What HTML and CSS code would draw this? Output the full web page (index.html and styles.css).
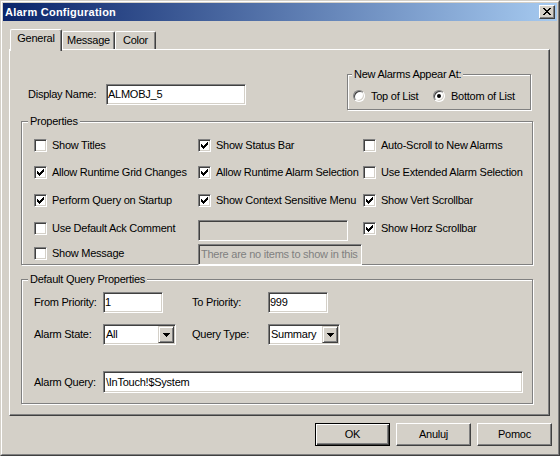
FILE: index.html
```html
<!DOCTYPE html>
<html>
<head>
<meta charset="utf-8">
<title>Alarm Configuration</title>
<link rel="stylesheet" href="styles.css">
</head>
<body>
<div class="window">
  <div class="frame">
    <div class="titlebar">
      <span class="title">Alarm Configuration</span>
      <span class="close"><svg class="close-glyph" width="8" height="7" viewBox="0 0 8 7" shape-rendering="crispEdges"><path d="M0 0h2v1h-2zM6 0h2v1h-2zM1 1h2v1h-2zM5 1h2v1h-2zM2 2h4v1h-4zM3 3h2v1h-2zM2 4h4v1h-4zM1 5h2v1h-2zM5 5h2v1h-2zM0 6h2v1h-2zM6 6h2v1h-2z" fill="#000"/></svg></span>
    </div>
    <div class="body">
      <div class="tabs">
        <div class="tab active t-general">General</div>
        <div class="tab t-message">Message</div>
        <div class="tab t-color">Color</div>
      </div>
      <div class="panel">
        <div class="top">
          <div class="name-row">
            <span class="name-lbl">Display Name:</span>
            <div class="edit name-edit">ALMOBJ_5</div>
          </div>
          <div class="group appear">
            <div class="gtitle">New Alarms Appear At:</div>
            <div class="radios">
              <div class="radio-item first"><span class="radio"></span><span>Top of List</span></div>
              <div class="radio-item"><span class="radio checked"></span><span>Bottom of List</span></div>
            </div>
          </div>
        </div>

        <div class="group props">
          <div class="gtitle">Properties</div>
          <div class="cbgrid">
            <div class="cb"><span class="box"></span><span>Show Titles</span></div>
            <div class="cb"><span class="box on"><svg width="11" height="11" viewBox="0 0 11 11" shape-rendering="crispEdges"><path d="M2 4h1v3h-1zM3 5h1v3h-1zM4 6h1v3h-1zM5 5h1v3h-1zM6 4h1v3h-1zM7 3h1v3h-1zM8 2h1v3h-1z" fill="#000"/></svg></span><span>Show Status Bar</span></div>
            <div class="cb"><span class="box"></span><span>Auto-Scroll to New Alarms</span></div>

            <div class="cb"><span class="box on"><svg width="11" height="11" viewBox="0 0 11 11" shape-rendering="crispEdges"><path d="M2 4h1v3h-1zM3 5h1v3h-1zM4 6h1v3h-1zM5 5h1v3h-1zM6 4h1v3h-1zM7 3h1v3h-1zM8 2h1v3h-1z" fill="#000"/></svg></span><span>Allow Runtime Grid Changes</span></div>
            <div class="cb"><span class="box on"><svg width="11" height="11" viewBox="0 0 11 11" shape-rendering="crispEdges"><path d="M2 4h1v3h-1zM3 5h1v3h-1zM4 6h1v3h-1zM5 5h1v3h-1zM6 4h1v3h-1zM7 3h1v3h-1zM8 2h1v3h-1z" fill="#000"/></svg></span><span>Allow Runtime Alarm Selection</span></div>
            <div class="cb"><span class="box"></span><span>Use Extended Alarm Selection</span></div>

            <div class="cb"><span class="box on"><svg width="11" height="11" viewBox="0 0 11 11" shape-rendering="crispEdges"><path d="M2 4h1v3h-1zM3 5h1v3h-1zM4 6h1v3h-1zM5 5h1v3h-1zM6 4h1v3h-1zM7 3h1v3h-1zM8 2h1v3h-1z" fill="#000"/></svg></span><span>Perform Query on Startup</span></div>
            <div class="cb"><span class="box on"><svg width="11" height="11" viewBox="0 0 11 11" shape-rendering="crispEdges"><path d="M2 4h1v3h-1zM3 5h1v3h-1zM4 6h1v3h-1zM5 5h1v3h-1zM6 4h1v3h-1zM7 3h1v3h-1zM8 2h1v3h-1z" fill="#000"/></svg></span><span>Show Context Sensitive Menu</span></div>
            <div class="cb"><span class="box on"><svg width="11" height="11" viewBox="0 0 11 11" shape-rendering="crispEdges"><path d="M2 4h1v3h-1zM3 5h1v3h-1zM4 6h1v3h-1zM5 5h1v3h-1zM6 4h1v3h-1zM7 3h1v3h-1zM8 2h1v3h-1z" fill="#000"/></svg></span><span>Show Vert Scrollbar</span></div>

            <div class="cb"><span class="box"></span><span>Use Default Ack Comment</span></div>
            <div class="edit disabled ack-edit"></div>
            <div class="cb"><span class="box on"><svg width="11" height="11" viewBox="0 0 11 11" shape-rendering="crispEdges"><path d="M2 4h1v3h-1zM3 5h1v3h-1zM4 6h1v3h-1zM5 5h1v3h-1zM6 4h1v3h-1zM7 3h1v3h-1zM8 2h1v3h-1z" fill="#000"/></svg></span><span>Show Horz Scrollbar</span></div>

            <div class="cb"><span class="box"></span><span>Show Message</span></div>
            <div class="edit disabled msg-edit">There are no items to show in this</div>
          </div>
        </div>

        <div class="group query">
          <div class="gtitle">Default Query Properties</div>
          <div class="qgrid">
            <span>From Priority:</span>
            <div class="edit prio-edit">1</div>
            <span>To Priority:</span>
            <div class="edit prio-edit">999</div>

            <span>Alarm State:</span>
            <div class="combo state-combo"><span class="combo-text">All</span><span class="combo-btn"><svg width="7" height="4" viewBox="0 0 7 4" shape-rendering="crispEdges"><path d="M0 0h7v1h-7zM1 1h5v1h-5zM2 2h3v1h-3zM3 3h1v1h-1z" fill="#000"/></svg></span></div>
            <span>Query Type:</span>
            <div class="combo type-combo"><span class="combo-text">Summary</span><span class="combo-btn"><svg width="7" height="4" viewBox="0 0 7 4" shape-rendering="crispEdges"><path d="M0 0h7v1h-7zM1 1h5v1h-5zM2 2h3v1h-3zM3 3h1v1h-1z" fill="#000"/></svg></span></div>

            <span class="q-lbl3">Alarm Query:</span>
            <div class="edit q-query">\InTouch!$System</div>
          </div>
        </div>
      </div>
      <div class="buttons">
        <div class="btn default">OK</div>
        <div class="btn">Anuluj</div>
        <div class="btn">Pomoc</div>
      </div>
    </div>
  </div>
</div>
</body>
</html>
```

FILE: styles.css
```css
* { box-sizing: border-box; }
html, body { margin: 0; padding: 0; }
body {
  background: #d4d0c8;
  font: 11px/13px "Liberation Sans", Arial, sans-serif;
  letter-spacing: -0.25px;
  color: #000;
}

.window {
  width: 560px;
  height: 456px;
  border: 1px solid;
  border-color: #d4d0c8 #404040 #404040 #d4d0c8;
  background: #d4d0c8;
}
.frame {
  height: 100%;
  border: 1px solid;
  border-color: #fff #808080 #808080 #fff;
  padding: 1px;
  display: flex;
  flex-direction: column;
}

/* title bar */
.titlebar {
  flex: none;
  height: 18px;
  display: flex;
  align-items: flex-start;
  justify-content: space-between;
  background: linear-gradient(to right, #0a246a, #a6caf0);
  padding: 0 2px 0 2px;
}
.title {
  color: #fff;
  font-weight: bold;
  letter-spacing: 0.25px;
  line-height: 18px;
}
.close {
  margin-top: 2px;
  width: 16px;
  height: 14px;
  background: #d4d0c8;
  border: 1px solid;
  border-color: #fff #404040 #404040 #fff;
  box-shadow: inset -1px -1px #808080;
  padding: 2px 0 0 3px;
}
.close-glyph { display: block; }

/* body */
.body {
  flex: 1;
  padding: 0 5px 0 6px;
  display: flex;
  flex-direction: column;
}

/* tabs */
.tabs {
  display: flex;
  align-items: flex-end;
  height: 20px;
  margin: 8px 0 0 1px;
}
.tab {
  height: 18px;
  padding-top: 2px;
  text-align: center;
  border: 1px solid;
  border-bottom: 0;
  border-color: #fff #404040 #404040 #fff;
  border-top-left-radius: 2px;
  border-top-right-radius: 2px;
  box-shadow: inset -1px 0 #808080;
  background: #d4d0c8;
}
.tab.active {
  height: 22px;
  margin-bottom: -2px;
  position: relative;
  z-index: 1;
}
.t-general { width: 52px; }
.t-message { width: 53px; }
.t-color { width: 41px; }

/* panel */
.panel {
  flex: none;
  width: 541px;
  height: 367px;
  border: 1px solid;
  border-color: #fff #404040 #404040 #fff;
  box-shadow: inset -1px -1px #808080;
  padding: 0 0 0 11px;
}

.top {
  height: 71px;
  display: flex;
  align-items: flex-start;
}
.name-row {
  display: flex;
  align-items: center;
  margin: 34px 0 0 7px;
}
.name-lbl { width: 78px; }

/* edit fields */
.edit {
  height: 21px;
  border: 1px solid;
  border-color: #808080 #fff #fff #808080;
  box-shadow: inset 1px 1px #404040, inset -1px -1px #d4d0c8;
  background: #fff;
  padding: 0 2px 0 1px;
  line-height: 19px;
  white-space: nowrap;
  overflow: hidden;
}
.edit.disabled {
  background: #d4d0c8;
  color: #808080;
}
.name-edit { width: 140px; }
.ack-edit { width: 150px; margin-top: -2px; }
.msg-edit { width: 164px; margin-top: -3px; padding: 0 0 0 2px; }
.prio-edit { width: 60px; }

/* group boxes */
.group {
  border: 1px solid #808080;
  box-shadow: inset 1px 1px #fff, 1px 1px #fff;
}
.gtitle {
  width: max-content;
  margin: -7px 0 0 6px;
  padding: 0 2px;
  background: #d4d0c8;
  line-height: 13px;
}
.appear {
  width: 184px;
  height: 36px;
  margin: 24px 0 0 101px;
}
.appear .gtitle { margin-left: 4px; }
.radios {
  display: flex;
  align-items: center;
  height: 14px;
  margin: 8px 0 0 5px;
}
.radio-item {
  display: flex;
  align-items: center;
  gap: 6px;
  white-space: nowrap;
}
.radio-item.first { width: 80px; }
.radio {
  flex: none;
  position: relative;
  width: 12px;
  height: 12px;
  border-radius: 50%;
  border: 1px solid;
  border-color: #808080 #fff #fff #808080;
  box-shadow: inset 1px 1px #404040, inset -1px -1px #d4d0c8;
  background: #fff;
}
.radio.checked::after {
  content: "";
  position: absolute;
  left: 3px;
  top: 3px;
  width: 4px;
  height: 4px;
  border-radius: 50%;
  background: #000;
}

/* properties */
.props {
  width: 512px;
  height: 144px;
}
.cbgrid {
  display: grid;
  grid-template-columns: 164px 165px 1fr;
  grid-template-rows: 27px 28px 28px 25px 17px;
  align-items: start;
  margin: 11px 0 0 12px;
}
.cb {
  display: flex;
  align-items: center;
  gap: 5px;
  white-space: nowrap;
  height: 13px;
}
.box {
  flex: none;
  width: 13px;
  height: 13px;
  border: 1px solid;
  border-color: #808080 #fff #fff #808080;
  box-shadow: inset 1px 1px #404040, inset -1px -1px #d4d0c8;
  background: #fff;
}
.box svg { display: block; }

/* query */
.query {
  width: 512px;
  height: 125px;
  margin-top: 14px;
}
.qgrid {
  display: grid;
  grid-template-columns: 69px 89px 76px 1fr;
  row-gap: 11px;
  align-items: center;
  justify-items: start;
  margin: 6px 0 0 12px;
}
.q-lbl3 { margin-top: 15px; }
.q-query {
  grid-column: 2 / 5;
  width: 420px;
  height: 22px;
  line-height: 20px;
  margin-top: 15px;
  padding-left: 2px;
}

.combo {
  height: 21px;
  display: flex;
  border: 1px solid;
  border-color: #808080 #fff #fff #808080;
  box-shadow: inset 1px 1px #404040, inset -1px -1px #d4d0c8;
  background: #fff;
  padding: 1px;
}
.state-combo { width: 73px; }
.type-combo { width: 72px; }
.combo-text {
  flex: 1;
  padding-left: 1px;
  line-height: 17px;
  white-space: nowrap;
  overflow: hidden;
}
.combo-btn {
  flex: none;
  width: 16px;
  height: 17px;
  border: 1px solid;
  border-color: #d4d0c8 #404040 #404040 #d4d0c8;
  box-shadow: inset 1px 1px #fff, inset -1px -1px #808080;
  background: #d4d0c8;
  display: flex;
  align-items: center;
  justify-content: center;
}
.combo-btn svg { display: block; }

/* buttons */
.buttons {
  display: flex;
  justify-content: flex-end;
  gap: 6px;
  margin-top: 7px;
}
.btn {
  width: 75px;
  height: 23px;
  border: 1px solid;
  border-color: #fff #404040 #404040 #fff;
  box-shadow: inset -1px -1px #808080;
  background: #d4d0c8;
  text-align: center;
  line-height: 21px;
}
.btn.default {
  border-color: #000;
  box-shadow: inset 1px 1px #fff, inset -1px -1px #404040, inset -2px -2px #808080;
}
```
